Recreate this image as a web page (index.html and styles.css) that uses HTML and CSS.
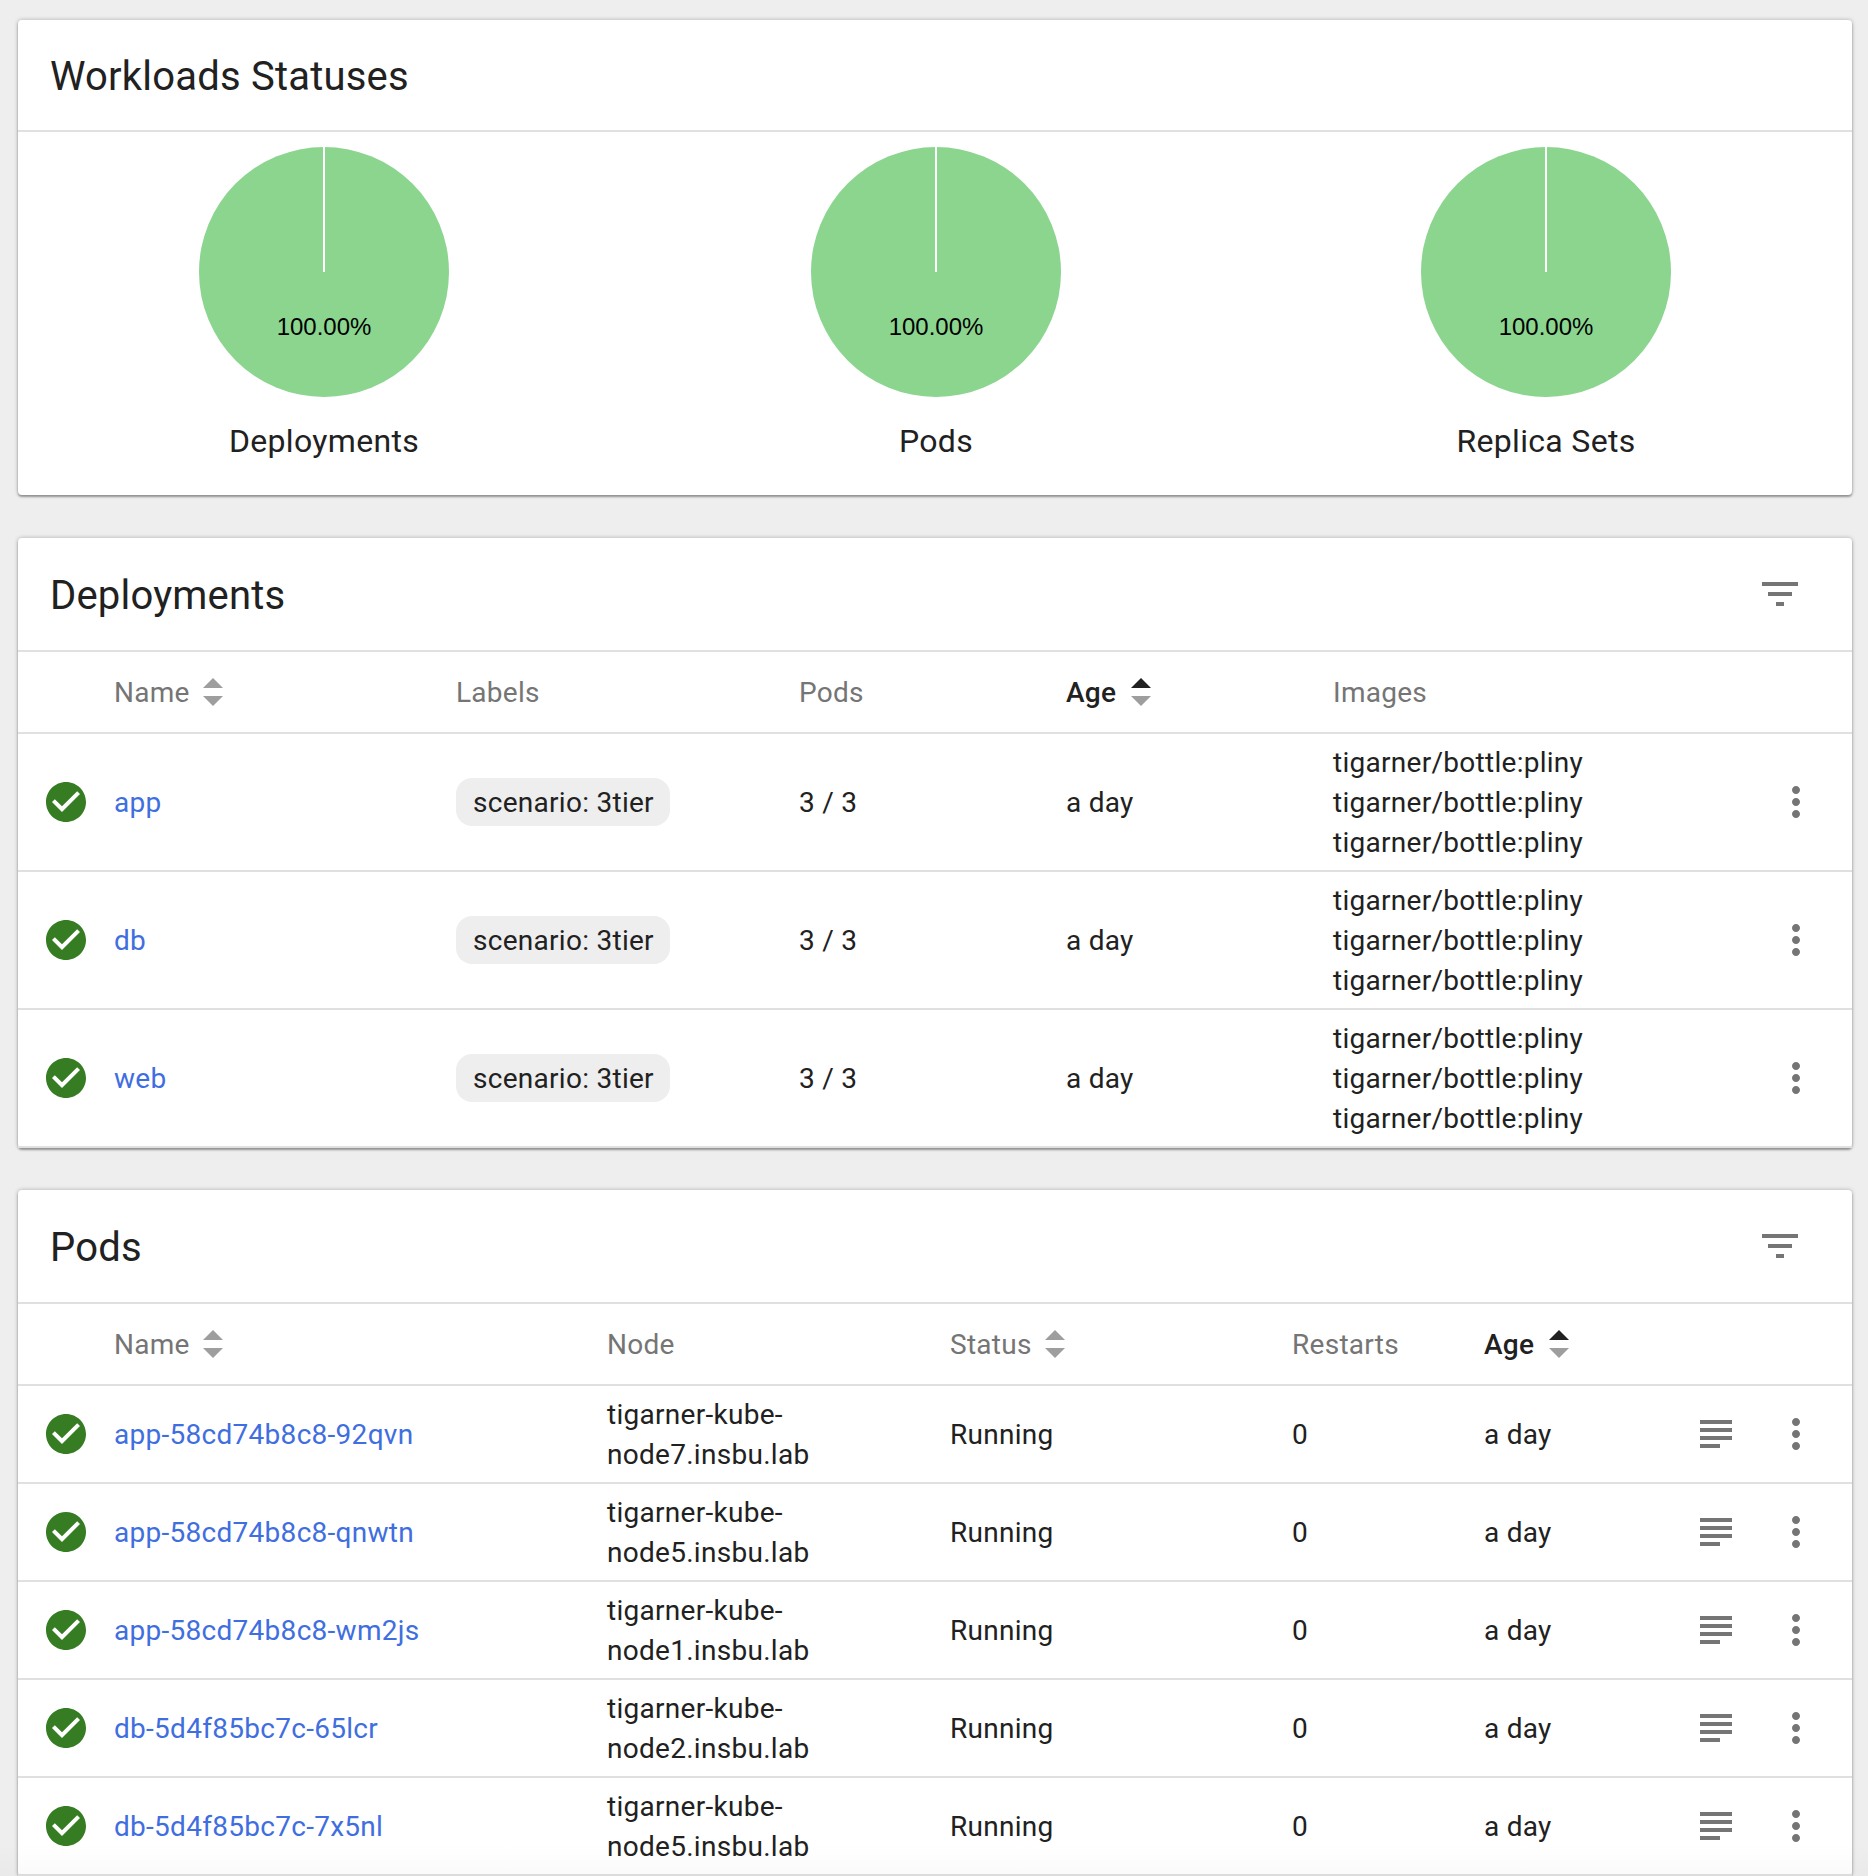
FILE: index.html
```html
<!DOCTYPE html>
<html lang="en">
<head>
<meta charset="utf-8">
<title>Workloads</title>
<link rel="stylesheet" href="styles.css">
</head>
<body>
<svg class="defs" width="0" height="0" aria-hidden="true">
  <symbol id="i-check" viewBox="0 0 24 24"><path d="M12 2C6.48 2 2 6.48 2 12s4.48 10 10 10 10-4.48 10-10S17.52 2 12 2zm-2 15l-5-5 1.41-1.41L10 14.17l7.59-7.59L19 8l-9 9z"/></symbol>
  <symbol id="i-filter" viewBox="0 0 24 24"><path d="M10 18h4v-2h-4v2zM3 6v2h18V6H3zm3 7h12v-2H6v2z"/></symbol>
  <symbol id="i-more" viewBox="0 0 24 24"><path d="M12 8c1.1 0 2-.9 2-2s-.9-2-2-2-2 .9-2 2 .9 2 2 2zm0 2c-1.1 0-2 .9-2 2s.9 2 2 2 2-.9 2-2-.9-2-2-2zm0 6c-1.1 0-2 .9-2 2s.9 2 2 2 2-.9 2-2-.9-2-2-2z"/></symbol>
  <symbol id="i-logs" viewBox="0 0 24 24"><path d="M14 17H4v2h10v-2zm6-8H4v2h16V9zM4 15h16v-2H4v2zM4 5v2h16V5H4z"/></symbol>
</svg>
<main class="page">
  <section class="card card-status">
    <header class="card-head"><h2>Workloads Statuses</h2></header>
    <div class="pies">
      <figure class="pie">
        <svg class="pie-svg" width="250" height="250" viewBox="0 0 250 250"><circle cx="125" cy="125" r="125" class="pie-fill"/><line x1="125" y1="0" x2="125" y2="125" class="pie-line"/><text x="125" y="188" class="pie-text">100.00%</text></svg>
        <figcaption>Deployments</figcaption>
      </figure>
      <figure class="pie">
        <svg class="pie-svg" width="250" height="250" viewBox="0 0 250 250"><circle cx="125" cy="125" r="125" class="pie-fill"/><line x1="125" y1="0" x2="125" y2="125" class="pie-line"/><text x="125" y="188" class="pie-text">100.00%</text></svg>
        <figcaption>Pods</figcaption>
      </figure>
      <figure class="pie">
        <svg class="pie-svg" width="250" height="250" viewBox="0 0 250 250"><circle cx="125" cy="125" r="125" class="pie-fill"/><line x1="125" y1="0" x2="125" y2="125" class="pie-line"/><text x="125" y="188" class="pie-text">100.00%</text></svg>
        <figcaption>Replica Sets</figcaption>
      </figure>
    </div>
  </section>

  <section class="card">
    <header class="card-head"><h2>Deployments</h2><svg class="icon"><use href="#i-filter"/></svg></header>
    <div class="row row-head grid-dep">
      <span></span>
      <span class="th">Name <svg class="sort" viewBox="0 0 20 28"><path class="up" d="M10 0l10 10H0z"/><path class="down" d="M0 18h20L10 28z"/></svg></span>
      <span class="th">Labels</span>
      <span class="th">Pods</span>
      <span class="th active">Age <svg class="sort" viewBox="0 0 20 28"><path class="up" d="M10 0l10 10H0z"/><path class="down" d="M0 18h20L10 28z"/></svg></span>
      <span class="th">Images</span>
      <span></span>
    </div>
    <div class="row grid-dep">
      <svg class="icon ok"><use href="#i-check"/></svg><a class="cell link">app</a><span class="chip-cell"><span class="chip">scenario: 3tier</span></span><span class="cell">3 / 3</span><span class="cell">a day</span>
      <span class="cell">tigarner/bottle:pliny<br>tigarner/bottle:pliny<br>tigarner/bottle:pliny</span>
      <svg class="icon"><use href="#i-more"/></svg>
    </div>
    <div class="row grid-dep">
      <svg class="icon ok"><use href="#i-check"/></svg><a class="cell link">db</a><span class="chip-cell"><span class="chip">scenario: 3tier</span></span><span class="cell">3 / 3</span><span class="cell">a day</span>
      <span class="cell">tigarner/bottle:pliny<br>tigarner/bottle:pliny<br>tigarner/bottle:pliny</span>
      <svg class="icon"><use href="#i-more"/></svg>
    </div>
    <div class="row grid-dep">
      <svg class="icon ok"><use href="#i-check"/></svg><a class="cell link">web</a><span class="chip-cell"><span class="chip">scenario: 3tier</span></span><span class="cell">3 / 3</span><span class="cell">a day</span>
      <span class="cell">tigarner/bottle:pliny<br>tigarner/bottle:pliny<br>tigarner/bottle:pliny</span>
      <svg class="icon"><use href="#i-more"/></svg>
    </div>
  </section>

  <section class="card">
    <header class="card-head"><h2>Pods</h2><svg class="icon"><use href="#i-filter"/></svg></header>
    <div class="row row-head grid-pod">
      <span></span>
      <span class="th">Name <svg class="sort" viewBox="0 0 20 28"><path class="up" d="M10 0l10 10H0z"/><path class="down" d="M0 18h20L10 28z"/></svg></span>
      <span class="th">Node</span>
      <span class="th">Status <svg class="sort" viewBox="0 0 20 28"><path class="up" d="M10 0l10 10H0z"/><path class="down" d="M0 18h20L10 28z"/></svg></span>
      <span class="th">Restarts</span>
      <span class="th active">Age <svg class="sort" viewBox="0 0 20 28"><path class="up" d="M10 0l10 10H0z"/><path class="down" d="M0 18h20L10 28z"/></svg></span>
      <span></span><span></span>
    </div>
    <div class="row grid-pod">
      <svg class="icon ok"><use href="#i-check"/></svg><a class="cell link">app-58cd74b8c8-92qvn</a><span class="cell">tigarner-kube-<br>node7.insbu.lab</span><span class="cell">Running</span><span class="cell">0</span><span class="cell">a day</span>
      <svg class="icon"><use href="#i-logs"/></svg><svg class="icon"><use href="#i-more"/></svg>
    </div>
    <div class="row grid-pod">
      <svg class="icon ok"><use href="#i-check"/></svg><a class="cell link">app-58cd74b8c8-qnwtn</a><span class="cell">tigarner-kube-<br>node5.insbu.lab</span><span class="cell">Running</span><span class="cell">0</span><span class="cell">a day</span>
      <svg class="icon"><use href="#i-logs"/></svg><svg class="icon"><use href="#i-more"/></svg>
    </div>
    <div class="row grid-pod">
      <svg class="icon ok"><use href="#i-check"/></svg><a class="cell link">app-58cd74b8c8-wm2js</a><span class="cell">tigarner-kube-<br>node1.insbu.lab</span><span class="cell">Running</span><span class="cell">0</span><span class="cell">a day</span>
      <svg class="icon"><use href="#i-logs"/></svg><svg class="icon"><use href="#i-more"/></svg>
    </div>
    <div class="row grid-pod">
      <svg class="icon ok"><use href="#i-check"/></svg><a class="cell link">db-5d4f85bc7c-65lcr</a><span class="cell">tigarner-kube-<br>node2.insbu.lab</span><span class="cell">Running</span><span class="cell">0</span><span class="cell">a day</span>
      <svg class="icon"><use href="#i-logs"/></svg><svg class="icon"><use href="#i-more"/></svg>
    </div>
    <div class="row grid-pod">
      <svg class="icon ok"><use href="#i-check"/></svg><a class="cell link">db-5d4f85bc7c-7x5nl</a><span class="cell">tigarner-kube-<br>node5.insbu.lab</span><span class="cell">Running</span><span class="cell">0</span><span class="cell">a day</span>
      <svg class="icon"><use href="#i-logs"/></svg><svg class="icon"><use href="#i-more"/></svg>
    </div>
  </section>
</main>
</body>
</html>
```
FILE: styles.css
```css
* { box-sizing: border-box; }
html, body { margin: 0; height: 1876px; overflow: hidden; }
body {
  background: #eeeeee;
  color: #212121;
  font-family: Roboto, "Liberation Sans", sans-serif;
  font-size: 28px;
  line-height: 40px;
  letter-spacing: 0.28px;
  position: relative;
}
body::after {
  content: "";
  position: absolute;
  left: 0;
  right: 0;
  bottom: 0;
  height: 32px;
  background: linear-gradient(to bottom, rgba(0,0,0,0), rgba(0,0,0,0.02));
  pointer-events: none;
}
.defs { position: absolute; }
.page {
  display: flex;
  flex-direction: column;
  gap: 42px;
  padding: 20px 16px 0 18px;
}
.card {
  background: #fff;
  border-radius: 4px;
  box-shadow: 0 2px 2px rgba(0,0,0,.3), 0 0 4px rgba(0,0,0,.28);
  flex: none;
}
.card-status { margin-bottom: 1px; }
.card-head {
  height: 114px;
  display: flex;
  align-items: center;
  justify-content: space-between;
  padding: 0 48px 0 32px;
  border-bottom: 2px solid #e0e0e0;
}
.card-status .card-head { height: 112px; }
h2 {
  margin: 0;
  padding-top: 4px;
  font-size: 40px;
  font-weight: 400;
  line-height: 48px;
  letter-spacing: 0.2px;
  color: #212121;
}
.icon { width: 48px; height: 48px; fill: #757575; display: block; flex: none; }
.icon.ok { fill: #367c22; }
.pies {
  display: grid;
  grid-template-columns: 612px 612px 1fr;
  padding: 15px 2px 0 0;
  height: 363px;
}
.pie { margin: 0; display: flex; flex-direction: column; align-items: center; }
.pie-svg { display: block; }
.pie-fill { fill: #8bd58f; }
.pie-line { stroke: #fff; stroke-width: 2; }
.pie-text { font-family: "Liberation Sans", Arial, sans-serif; font-size: 24px; letter-spacing: 0; fill: #000; text-anchor: middle; }
figcaption { margin-top: 24px; font-size: 32px; line-height: 40px; letter-spacing: 0.32px; color: #212121; }
.row {
  display: grid;
  align-items: center;
  padding: 7px 32px 7px 24px;
  border-bottom: 2px solid #e0e0e0;
}
.row-head { height: 82px; padding-top: 0; padding-bottom: 0; }
.grid-dep { grid-template-columns: 72px 342px 343px 267px 267px 1fr 48px; }
.grid-pod { grid-template-columns: 72px 493px 343px 342px 192px 208px 80px 48px; }
.cell { display: block; padding-top: 2px; }
.th {
  color: #757575;
  display: inline-flex;
  align-items: center;
  gap: 8px;
  padding-top: 2px;
}
.th.active { color: #212121; font-weight: 500; }
.sort { width: 20px; height: 28px; display: block; margin: 0 0 2px 5px; }
.th.active .sort { margin-left: 7px; }
.sort path { fill: #9e9e9e; }
.th.active .sort .up { fill: #212121; }
.link { color: #3f6ee0; }
.chip-cell { display: block; }
.chip {
  display: inline-block;
  vertical-align: top;
  background: #eeeeee;
  border-radius: 16px;
  padding: 5px 16px 3px 17px;
  height: 48px;
}
```
